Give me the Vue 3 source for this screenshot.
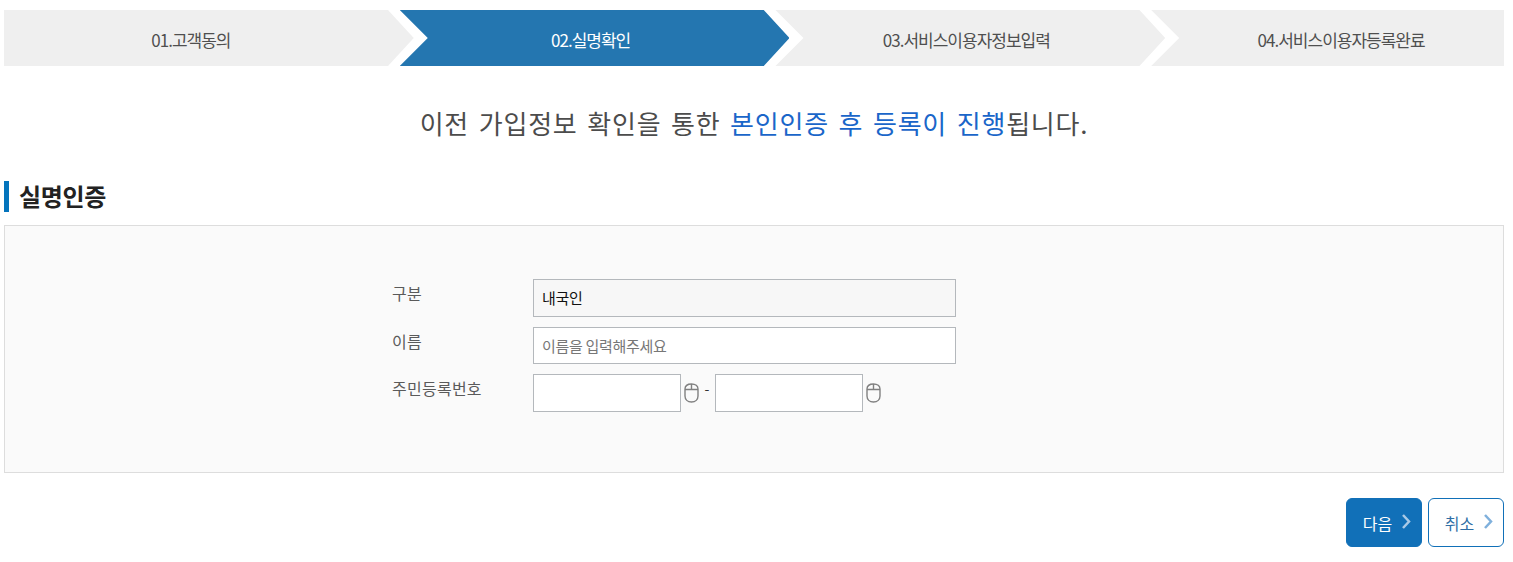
<template>
  <div class="page">
    <ol class="steps">
      <li
        v-for="(step, i) in steps"
        :key="step"
        class="step"
        :class="['step' + (i + 1), { active: i === 1 }]"
      >
        {{ step }}
      </li>
    </ol>

    <p class="lead">
      이전 가입정보 확인을 통한 <em>본인인증 후 등록이 진행</em>됩니다.
    </p>

    <h2 class="title">실명인증</h2>

    <div class="box">
      <div class="form">
        <label class="label">구분</label>
        <div class="field"><input class="input wide readonly" value="내국인" readonly></div>

        <label class="label">이름</label>
        <div class="field"><input class="input wide name" placeholder="이름을 입력해주세요"></div>

        <label class="label">주민등록번호</label>
        <div class="field">
          <input class="input short">
          <svg class="mouse" width="15" height="20" viewBox="0 0 15 20" fill="none" stroke="#808080" stroke-width="1.4">
            <path d="M1 6C1 3 3.500 1 7.500 1S14 3 14 6V13c0 3.500-2.500 6-6.500 6S1 16.500 1 13Z" />
            <path d="M1 6.500H14M7.500 1V6.500" />
          </svg>
          <span class="dash">-</span>
          <input class="input short">
          <svg class="mouse" width="15" height="20" viewBox="0 0 15 20" fill="none" stroke="#808080" stroke-width="1.4">
            <path d="M1 6C1 3 3.500 1 7.500 1S14 3 14 6V13c0 3.500-2.500 6-6.500 6S1 16.500 1 13Z" />
            <path d="M1 6.500H14M7.500 1V6.500" />
          </svg>
        </div>
      </div>
    </div>

    <div class="buttons">
      <button class="btn primary">
        다음
        <svg width="9" height="15" viewBox="0 0 9 15" fill="none" stroke="#a9c9e6" stroke-width="2.500"><path d="M1 1L7 7.500L1 14" /></svg>
      </button>
      <button class="btn outline">
        취소
        <svg width="9" height="15" viewBox="0 0 9 15" fill="none" stroke="#7fb0dc" stroke-width="2.500"><path d="M1 1L7 7.500L1 14" /></svg>
      </button>
    </div>
  </div>
</template>

<script setup>
const steps = ['01.고객동의', '02.실명확인', '03.서비스이용자정보입력', '04.서비스이용자등록완료']
</script>

<style>
html, body {
  background: #fff;
}
</style>

<style scoped>
.page {
  width: 1500px;
  margin-left: 4px;
  padding-top: 10px;
  font-family: "Noto Sans CJK KR", "Noto Sans", sans-serif;
  color: #444;
}

.steps {
  display: flex;
  list-style: none;
  margin: 0;
  padding: 0;
  height: 56px;
}

.step {
  display: flex;
  align-items: center;
  justify-content: center;
  height: 56px;
  box-sizing: border-box;
  padding-top: 3px;
  background: #efefef;
  font-size: 17px;
  letter-spacing: -1px;
  color: #4f4f4f;
}

.step1 {
  width: 410px;
  padding-right: 36px;
  clip-path: polygon(0 0, 384px 0, 100% 50%, 384px 100%, 0 100%);
}

.step2,
.step3 {
  width: 390px;
  margin-left: -14px;
  padding-right: 8px;
  clip-path: polygon(0 0, 364px 0, 100% 50%, 364px 100%, 0 100%, 28px 50%);
}

.step4 {
  width: 353px;
  margin-left: -14px;
  padding-left: 27px;
  clip-path: polygon(0 0, 100% 0, 100% 100%, 0 100%, 28px 50%);
}

.step.active {
  background: #2476b0;
  color: #fff;
}

.lead {
  margin: 36px 0 0;
  height: 42px;
  line-height: 42px;
  text-align: center;
  font-size: 26px;
  letter-spacing: 0.8px;
  word-spacing: 3px;
  color: #4c4c4c;
}

.lead em {
  font-style: normal;
  color: #1a66c9;
}

.title {
  margin: 37px 0 0;
  padding-left: 10px;
  height: 31px;
  line-height: 29px;
  border-left: 5px solid #0474bc;
  font-size: 24px;
  font-weight: 700;
  letter-spacing: -0.3px;
  color: #222;
}

.box {
  margin-top: 13px;
  height: 248px;
  box-sizing: border-box;
  border: 1px solid #ddd;
  background: #fafafa;
  padding: 53px 0 0 387px;
}

.form {
  display: grid;
  grid-template-columns: 141px 423px;
  row-gap: 10px;
}

.label {
  font-size: 16px;
  letter-spacing: 0.25px;
  line-height: 28px;
  color: #5a5a5a;
}

.field {
  display: flex;
  align-items: flex-start;
}

.input {
  height: 38px;
  box-sizing: border-box;
  border: 1px solid #b4b8bc;
  background: #fff;
  padding: 0 8px 1px;
  font-family: inherit;
  font-size: 15px;
  letter-spacing: -0.3px;
  color: #111;
  outline: none;
}

.input::placeholder {
  color: #777;
}

.wide {
  width: 423px;
}

.name {
  height: 37px;
}

.readonly {
  background: #f7f7f7;
}

.short {
  width: 148px;
}

.mouse {
  margin: 9px 0 0 3px;
}

.dash {
  width: 16px;
  text-align: center;
  font-size: 14px;
  line-height: 28px;
  color: #333;
}

.buttons {
  display: flex;
  justify-content: flex-end;
  gap: 6px;
  margin-top: 25px;
}

.btn {
  display: flex;
  align-items: center;
  justify-content: center;
  gap: 10px;
  width: 76px;
  height: 49px;
  box-sizing: border-box;
  border-radius: 6px;
  font-family: inherit;
  font-size: 16px;
  padding: 0 0 0 6px;
}

.btn svg {
  margin-top: -2px;
}

.primary {
  border: 1px solid #1170b8;
  background: #1170b8;
  color: #fff;
}

.outline {
  border: 1px solid #1170b8;
  background: #fff;
  color: #2f6ea5;
}
</style>
